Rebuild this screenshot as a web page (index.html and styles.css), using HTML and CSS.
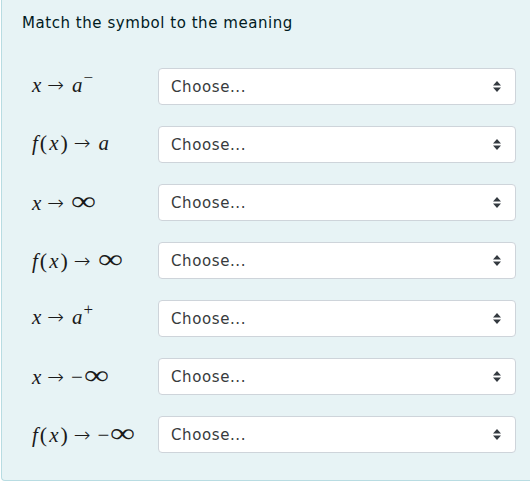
FILE: index.html
```html
<!DOCTYPE html>
<html>
<head>
<meta charset="utf-8">
<link rel="stylesheet" href="styles.css">
</head>
<body>
<div class="formulation">
  <div class="qtext">Match the symbol to the meaning</div>
  <div class="answers">
    <div class="math"><i>x</i><span class="arr">→</span><i>a</i><sup>−</sup></div>
    <div class="selwrap"><select class="custom-select"><option>Choose...</option></select><svg class="chev" width="8" height="11" viewBox="0 0 8 11"><path d="M4 0 L8 4.5 L0 4.5 Z M0 6.5 L8 6.5 L4 11 Z" fill="#343a40"/></svg></div>

    <div class="math"><i class="f">f</i><span class="p">(</span><i>x</i><span class="p">)</span><span class="arr">→</span><i>a</i></div>
    <div class="selwrap"><select class="custom-select"><option>Choose...</option></select><svg class="chev" width="8" height="11" viewBox="0 0 8 11"><path d="M4 0 L8 4.5 L0 4.5 Z M0 6.5 L8 6.5 L4 11 Z" fill="#343a40"/></svg></div>

    <div class="math"><i>x</i><span class="arr">→</span><span class="inf">∞</span></div>
    <div class="selwrap"><select class="custom-select"><option>Choose...</option></select><svg class="chev" width="8" height="11" viewBox="0 0 8 11"><path d="M4 0 L8 4.5 L0 4.5 Z M0 6.5 L8 6.5 L4 11 Z" fill="#343a40"/></svg></div>

    <div class="math"><i class="f">f</i><span class="p">(</span><i>x</i><span class="p">)</span><span class="arr">→</span><span class="inf">∞</span></div>
    <div class="selwrap"><select class="custom-select"><option>Choose...</option></select><svg class="chev" width="8" height="11" viewBox="0 0 8 11"><path d="M4 0 L8 4.5 L0 4.5 Z M0 6.5 L8 6.5 L4 11 Z" fill="#343a40"/></svg></div>

    <div class="math"><i>x</i><span class="arr">→</span><i>a</i><sup>+</sup></div>
    <div class="selwrap"><select class="custom-select"><option>Choose...</option></select><svg class="chev" width="8" height="11" viewBox="0 0 8 11"><path d="M4 0 L8 4.5 L0 4.5 Z M0 6.5 L8 6.5 L4 11 Z" fill="#343a40"/></svg></div>

    <div class="math"><i>x</i><span class="arr">→</span><span class="minus">−</span><span class="inf">∞</span></div>
    <div class="selwrap"><select class="custom-select"><option>Choose...</option></select><svg class="chev" width="8" height="11" viewBox="0 0 8 11"><path d="M4 0 L8 4.5 L0 4.5 Z M0 6.5 L8 6.5 L4 11 Z" fill="#343a40"/></svg></div>

    <div class="math"><i class="f">f</i><span class="p">(</span><i>x</i><span class="p">)</span><span class="arr">→</span><span class="minus">−</span><span class="inf">∞</span></div>
    <div class="selwrap"><select class="custom-select"><option>Choose...</option></select><svg class="chev" width="8" height="11" viewBox="0 0 8 11"><path d="M4 0 L8 4.5 L0 4.5 Z M0 6.5 L8 6.5 L4 11 Z" fill="#343a40"/></svg></div>
  </div>
</div>
</body>
</html>
```

FILE: styles.css
```css
html, body {
  margin: 0;
  padding: 0;
  background: #ffffff;
}
body {
  font-family: "DejaVu Sans", Verdana, sans-serif;
  font-size: 15px;
  line-height: 1.5;
  color: #001a1e;
  overflow: hidden;
}
.formulation {
  margin-left: 1px;
  background: #e7f3f5;
  border-left: 1px solid #b8dce2;
  border-bottom: 1px solid #b8dce2;
  border-bottom-left-radius: 4px;
  padding: 12px 0 27px 20px;
}
.qtext {
  font-size: 15px;
  letter-spacing: 0.55px;
}
.answers {
  margin-top: 33.5px;
  margin-left: 9px;
  display: grid;
  grid-template-columns: 127px 358px;
  row-gap: 21px;
  align-items: center;
}
.math {
  display: flex;
  align-items: baseline;
  font-family: "Liberation Serif", "Times New Roman", serif;
  font-size: 21px;
  color: #1a1a1a;
  white-space: nowrap;
  line-height: 1;
  padding-bottom: 3px;
}
.math i {
  font-style: italic;
  padding-left: 1px;
  padding-right: 1px;
}
.math i.f {
  padding-right: 1px;
}
.math .arr {
  font-family: "DejaVu Sans", sans-serif;
  font-weight: 200;
  font-size: 20px;
  margin: 0 7px 0 5px;
}
.math .p {
  font-size: 22px;
  margin: 0 1px;
}
.math sup {
  font-size: 17px;
  position: relative;
  top: -9px;
  vertical-align: baseline;
  margin-left: 0;
}
.math .inf {
  font-size: 27px;
  display: inline-block;
  transform: scaleX(1.3);
  transform-origin: left center;
}
.math .minus {
  font-size: 21px;
  margin-right: 1px;
}
.selwrap {
  position: relative;
  height: 37px;
}
.custom-select {
  -webkit-appearance: none;
  appearance: none;
  width: 358px;
  height: 37px;
  padding: 0 28px 0 12px;
  border: 1px solid #ced4da;
  border-radius: 4px;
  background: #ffffff;
  font-family: "DejaVu Sans", Verdana, sans-serif;
  font-size: 15px;
  letter-spacing: 0.6px;
  color: #373a3c;
  box-sizing: border-box;
  display: block;
}
.chev {
  position: absolute;
  right: 15px;
  top: 13px;
  pointer-events: none;
}
```
